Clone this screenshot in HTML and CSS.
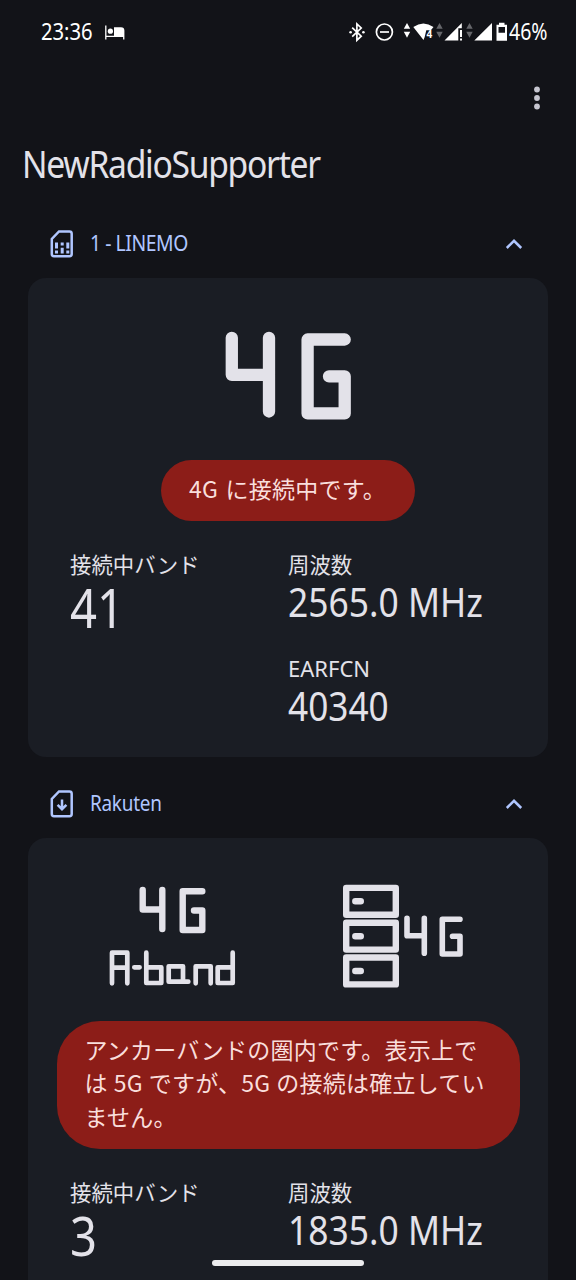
FILE: index.html
```html
<!DOCTYPE html>
<html lang="ja">
<head>
<meta charset="utf-8">
<title>NewRadioSupporter</title>
<link rel="stylesheet" href="styles.css">
</head>
<body>
<div class="screen">
  <header class="status">
    <span class="clock"><span class="fit fit-clock">23:36</span></span>
    <svg class="bed" width="20" height="15" viewBox="0 0 20 15"><path d="M.8 .5V14.5M.8 11.3H19" stroke="#fff" stroke-width="1.3" fill="none"/><circle cx="5.4" cy="6.2" r="2.6" fill="#fff"/><path d="M9 2.2h7a3.4 3.4 0 0 1 3.4 3.4v8.9h-1.3v-3H9z" fill="#fff"/></svg>
    <svg class="tray" width="160" height="24" viewBox="348 20 160 24">
      <g fill="none" stroke="#fff" stroke-width="1.7"><path d="M352.2 27.6l9 8.6-4.3 4V24l4.3 4-9 8.6"/><circle cx="384.4" cy="32" r="8" /><path d="M380 32h9"/></g>
      <circle cx="350.6" cy="32.2" r="1.3" fill="#fff"/><circle cx="363.4" cy="32.2" r="1.3" fill="#fff"/>
      <path d="M407 23l3.2 5.7h-6.4zM407 37.7l3.2-5.9h-6.4z" fill="#fff"/>
      <path d="M413.3 27q10.1-7 20.2 0l-2.6 3.2h-4.6l-1.6 6.8-1.2 3z" fill="#fff"/>
      <path d="M439.5 23l3.2 5.7h-6.4zM439.5 37.7l3.2-5.9h-6.4zM469.5 23l3.2 5.7h-6.4zM469.5 37.7l3.2-5.9h-6.4z" fill="#66676b"/>
      <path d="M444.5 40.5L461.8 23v5.3h-3.5v12.2zM460 30h2v7h-2zM460 38.5h2v2h-2zM474.3 40.5L492 23v17.5z" fill="#fff"/>
      <path d="M499 22.8h5.5v2h2.5v16h-10.500v-16h2.500zM498.500 27v5.800h6.500V27z" fill="#fff" fill-rule="evenodd"/>
      <text x="426.500" y="38" class="wifi-gen">4</text>
    </svg>
    <span class="battery"><span class="fit fit-battery">46%</span></span>
  </header>
  <div class="toolbar"><svg width="8" height="24" viewBox="0 0 8 24" fill="#c6c6d0"><circle cx="4" cy="3.500" r="2.900"/><circle cx="4" cy="12" r="2.900"/><circle cx="4" cy="20.500" r="2.900"/></svg></div>
  <h1 class="title"><span class="fit fit-title">NewRadioSupporter</span></h1>

  <section class="sim">
    <div class="sim-head">
      <svg class="sim-icon" width="24" height="30" viewBox="0 0 24 30"><path d="M9 2.500H19.500Q21.700 2.500 21.700 4.700V25Q21.700 27.200 19.500 27.200H4Q1.800 27.200 1.800 25V10z" class="line"/><path d="M5 13.500h3v6H5zM10.700 13.500h3v3h-3zM16.300 13.500h3v6h-3zM5 21.500h3v3H5zM10.700 18.700h3v5.800h-3zM16.300 21.500h3v3h-3z" fill="#b0c6ff"/></svg>
      <span class="sim-name"><span class="fit fit-linemo">1 - LINEMO</span></span>
      <svg class="chev" width="18" height="12" viewBox="0 0 18 12"><path d="M1.800 10L9 2.800 16.200 10" class="line"/></svg>
    </div>
    <div class="card">
      <div class="badges single">
        <svg role="img" width="128" height="90" viewBox="224 330 128 90" class="segments w12"><path d="M231.800 337.800V374.800H269M269 337.800V411.500M344.700 339.500H307.600V413.400H344.700V376.300H329"/></svg>
      </div>
      <div class="pill"><span class="row spaced">4G に接続中です。</span></div>
      <div class="facts">
        <div class="fact"><span class="label">接続中バンド</span><span class="band"><span class="fit fit-band">41</span></span></div>
        <div class="fact"><span class="label">周波数</span><span class="value"><span class="fit fit-mhz">2565.0 MHz</span></span>
        <span class="label second"><span class="fit fit-earfcn">EARFCN</span></span><span class="value"><span class="fit fit-num">40340</span></span></div>
      </div>
    </div>
  </section>

  <section class="sim">
    <div class="sim-head">
      <svg class="sim-icon" width="24" height="30" viewBox="0 0 24 30"><path d="M9 2.500H19.500Q21.700 2.500 21.700 4.700V25Q21.700 27.200 19.500 27.200H4Q1.800 27.200 1.800 25V10z" class="line"/><path d="M12 10.500V20M7.600 15.800L12 20.200 16.400 15.800" class="line"/></svg>
      <span class="sim-name"><span class="fit fit-rakuten">Rakuten</span></span>
      <svg class="chev" width="18" height="12" viewBox="0 0 18 12"><path d="M1.800 10L9 2.800 16.200 10" class="line"/></svg>
    </div>
    <div class="card last">
      <div class="badges pair">
        <svg role="img" width="128" height="106" viewBox="108 884 128 106" class="segments">
          <path class="w6" d="M142.700 890V909.500H162.300M162.300 890V929M202.300 891.300H182.700V930H202.300V910.500H194"/>
          <path class="w4" d="M112 983.300V952.700H127.300V983.300M112 967.700H127.300M134.300 967.300H139.600M146.300 952.700V983H161.300V967.300H146.300M188.300 981.700H168.700V966.300H183V981.700M195.700 983.300V966.300H210.700V983.300M232.700 952.700V983H217.700V967.300H232.700"/>
        </svg>
        <svg role="img" width="122" height="106" viewBox="342 884 122 106" class="segments">
          <g class="w6"><rect x="346.200" y="887.900" width="49.600" height="26.900"/><rect x="346.200" y="922.700" width="49.600" height="26.900"/><rect x="346.200" y="957.500" width="49.600" height="26.900"/><path d="M355.300 901.300h5.500M355.300 936.200h5.500M355.300 971h5.500"/></g>
          <path class="w5" d="M407 918.200V935.700H424.300M424.300 918.200V953.200M460 919.300H442.300V954H460V936.300H452.500"/>
        </svg>
      </div>
      <div class="pill wide">
        <span class="row">アンカーバンドの圏内です。表示上で</span>
        <span class="row row-mixed">は 5G ですが、5G の接続は確立してい</span>
        <span class="row">ません。</span>
      </div>
      <div class="facts">
        <div class="fact"><span class="label">接続中バンド</span><span class="band"><span class="fit fit-band">3</span></span></div>
        <div class="fact"><span class="label">周波数</span><span class="value"><span class="fit fit-mhz">1835.0 MHz</span></span></div>
      </div>
    </div>
  </section>
  <div class="home-bar"></div>
</div>
</body>
</html>
```

FILE: styles.css
```css
* { box-sizing: border-box; }
html, body { margin: 0; background: #121318; }
body { font-family: "Noto Sans CJK JP", "Noto Sans", sans-serif; color: #e3e2e9; }
svg { display: block; flex: none; }
.screen { position: relative; width: 576px; height: 1280px; overflow: hidden; }
/* condensed faces: narrow the text without changing its height */
.fit { display: inline-block; vertical-align: top; line-height: inherit; white-space: pre; transform-origin: left center; font-family: "Noto Sans", sans-serif; }
.fit-clock { transform: scaleX(.86); }
.fit-battery { transform: scaleX(.83); }
.fit-title { transform: scaleX(.885); letter-spacing: -1.450px; }
.fit-linemo { transform: scaleX(.88); letter-spacing: -.500px; }
.fit-rakuten { transform: scaleX(.86); letter-spacing: -.300px; }
.fit-band { transform: scaleX(.85); }
.fit-mhz { transform: scaleX(.885); }
.fit-num { transform: scaleX(.88); }
.fit-earfcn { transform: scaleX(1); }
.status { display: flex; align-items: center; height: 64px; color: #fff; font-size: 23.500px; line-height: 62px; }
.clock { width: 64px; margin-left: 41px; height: 64px; }
.tray { margin-left: 223px; }
.battery { margin-left: 1px; height: 64px; }
.wifi-gen { font: bold 10px "Noto Sans", sans-serif; fill: #fff; }
.toolbar { height: 70px; display: flex; justify-content: flex-end; padding: 22px 35px 0 0; }
.title { margin: 0; padding-left: 20px; height: 76px; font-size: 38px; font-weight: 400; line-height: 58px; }
.sim { padding: 0 28px; }
.sim-head { height: 67.500px; display: flex; align-items: center; padding: 0 25px 0 22px; color: #b0c6ff; font-size: 22px; }
.line { fill: none; stroke: #b0c6ff; stroke-width: 2.500; }
.sim-name { flex: 1; margin-left: 16px; height: 30px; line-height: 27px; }
.card { height: 479px; background: #1a1d24; border-radius: 18px; margin-bottom: 14px; }
.last { height: 460px; }
.badges { display: flex; padding-top: 52.500px; height: 182.500px; }
.single { justify-content: center; }
.pair { padding: 46px 84px 0 80px; justify-content: space-between; }
.segments path { fill: none; stroke: #e3e2e9; stroke-linecap: round; stroke-linejoin: round; }
.segments rect { fill: none; stroke: #e3e2e9; stroke-linejoin: round; }
.w12 { stroke-width: 12.300; }
.w6, .w6 * { stroke-width: 6.400; }
.w5 { stroke-width: 5.600; }
.w4 { stroke-width: 4.700; }
.pill { width: 254px; height: 61px; margin: 0 auto; padding: 12.300px 28px; border-radius: 31px; background: #8c1d18; color: #f9dedc; font-size: 23px; line-height: 33.400px; letter-spacing: .25px; white-space: nowrap; }
.wide { width: 463px; height: 128.500px; border-radius: 43px; }
.row { display: block; }
.row-mixed { word-spacing: .500px; }
.spaced { word-spacing: 2px; }
.facts { display: grid; grid-template-columns: 218px 1fr; padding: 27px 0 0 42px; }
.fact { display: flex; flex-direction: column; }
.label { font-size: 21.400px; line-height: 32px; height: 32px; }
.value { font-size: 40px; line-height: 43px; height: 44px; }
.band { font-size: 55.500px; line-height: 54px; height: 56px; }
.second { margin-top: 28px; font-size: 22px; }
.home-bar { position: absolute; left: 212px; top: 1260px; width: 152px; height: 6px; border-radius: 3px; background: #ececee; }
.title { padding-left: 21.500px; }
```
